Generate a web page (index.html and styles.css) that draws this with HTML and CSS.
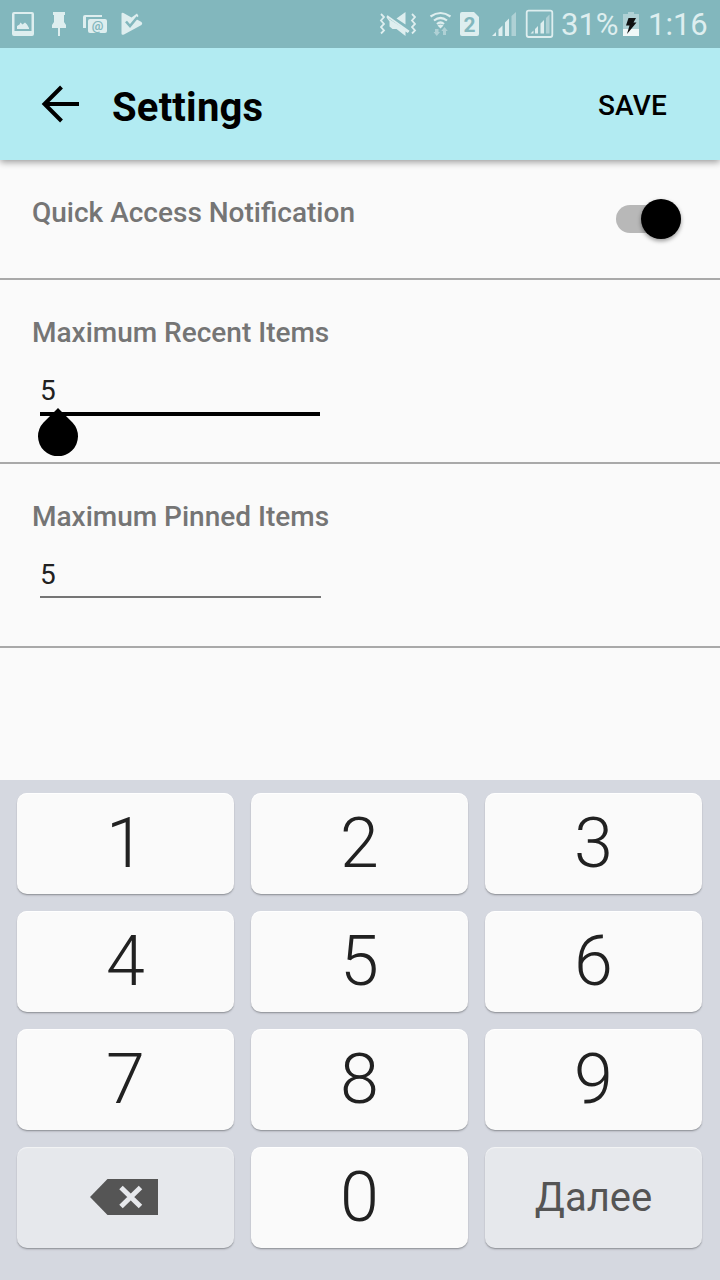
FILE: index.html
```html
<!DOCTYPE html>
<html lang="en">
<head>
    <meta charset="UTF-8">
    <meta name="viewport" content="width=device-width, initial-scale=1.0">
    <title>Settings</title>
    <link rel="stylesheet" href="styles.css">
</head>
<body>
    <!-- Status bar -->
    <div class="status-bar">
        <div class="status-left">
            <svg width="42" height="48" viewBox="0 0 42 48">
                <path fill-rule="evenodd" d="M14 12h18q2 0 2 2v20q0 2-2 2H14q-2 0-2-2V14q0-2 2-2zM14.500 14v17h17V14z"/>
                <path d="M17 29v-3l2.500-1.500 1-2 2 2 2.500-2 2 2 2 3.500v1z"/>
            </svg>
            <svg width="34" height="48" viewBox="42 0 34 48">
                <path d="M53 12h12v3h-1v7l2 3v3h-6v8h-2v-8h-6v-3l2-3v-7h-1z"/>
            </svg>
            <svg width="40" height="48" viewBox="76 0 40 48">
                <path d="M83 28V17q0-2 2-2h17v2H86v11z"/>
                <rect x="88" y="19" width="19" height="14" rx="2"/>
                <text class="at-sign" x="97.500" y="30" text-anchor="middle">@</text>
            </svg>
            <svg width="34" height="48" viewBox="116 0 34 48">
                <path d="M121.500 14q0-2 2-1l8 4.500 5.500-4 1.500 2.500-2.500 3 5.500 3q1.500 1.500 0 3L124 34.500q-2.500 1-2.500-1z"/>
                <path class="cut" d="M126 21.500l4 4.500 7.500-9"/>
            </svg>
        </div>
        <div class="status-right">
            <svg width="52" height="48" viewBox="372 0 52 48">
                <path class="line" d="M381 14l3 3-3 3.500 3 3.500-3 3 3 3.500-3 3M412 14l3 3-3 3.500 3 3.500-3 3 3 3.500-3 3"/>
                <path d="M405.500 12v12.500l-9-6zM389 19l20 12.500-1.300 1.500-2.200-1.500V36l-9-7h-4l-3-2.500v-5l-3-4 1.500-2z"/>
                <path class="line" d="M387 16l22 15.500"/>
            </svg>
            <svg width="32" height="48" viewBox="424 0 32 48">
                <path class="line wide" d="M430.500 16.500q10-7 20 0M434 20.500q6.500-5 13 0M437 24q3.500-3 7 0"/>
                <path d="M437.500 25.500q3-2 6 0l-3 3z"/>
                <path class="faded" d="M435 29h3.500v3h1.500l-3.200 4-3.300-4h1.500zM443 35v-4h-1.700l3.200-4 3.300 4H446v4z"/>
            </svg>
            <svg width="30" height="48" viewBox="456 0 30 48">
                <path d="M462 12h12l5 5v17q0 2-2 2h-15q-2 0-2-2V14q0-2 2-2z"/>
                <text class="sim-number" x="469.500" y="31.500" text-anchor="middle">2</text>
            </svg>
            <svg width="36" height="48" viewBox="486 0 36 48">
                <path d="M492 36l4-4v4zM498.500 29.500l4-4V36h-4zM505 22.500l4-4V36h-4z"/>
                <path class="faded" d="M511.500 16l4.500-4v24h-4.500z"/>
            </svg>
            <svg width="38" height="48" viewBox="522 0 38 48">
                <rect class="line" x="526.700" y="10.700" width="25.600" height="26.300" rx="2"/>
                <path d="M530.500 33.500l3-3v3zM535 29l3-3v7.500h-3zM540.500 23.500l3.500-3.500v13.500h-3.500z"/>
                <path class="faded" d="M546 18l3.500-3.500v19H546z"/>
            </svg>
            <span class="battery-level">31%</span>
            <svg width="30" height="48" viewBox="617 0 30 48">
                <path class="faded" d="M628 12h6v2h5v15h-16V14h5z"/>
                <rect class="charge" x="623" y="29" width="16" height="7"/>
                <path class="bolt" d="M628.500 18h7.500l-2.500 4.500h3L627 34l2.500-8.500H626z"/>
            </svg>
            <span class="clock">1:16</span>
        </div>
    </div>

    <!-- App bar -->
    <div class="app-bar">
        <svg class="back-arrow" width="40" height="40" viewBox="0 0 40 40">
            <path d="M39 20H4M21.500 3L4.500 20l17 17"/>
        </svg>
        <h1>Settings</h1>
        <button class="save">SAVE</button>
    </div>

    <!-- Settings list -->
    <div class="settings">
        <div class="setting switch-row">
            <h2>Quick Access Notification</h2>
            <div class="switch"><div class="thumb"></div></div>
        </div>
        <div class="setting">
            <h2>Maximum Recent Items</h2>
            <div class="field active">5
                <svg class="handle" width="40" height="48" viewBox="0 0 40 48">
                    <path d="M20 0L34.500 14.500A20 20 0 1 1 5.500 14.500z"/>
                </svg>
            </div>
        </div>
        <div class="setting">
            <h2>Maximum Pinned Items</h2>
            <div class="field">5</div>
        </div>
    </div>

    <!-- Keyboard -->
    <div class="keyboard">
        <div class="key">1</div>
        <div class="key">2</div>
        <div class="key">3</div>
        <div class="key">4</div>
        <div class="key">5</div>
        <div class="key">6</div>
        <div class="key">7</div>
        <div class="key">8</div>
        <div class="key">9</div>
        <div class="key special">
            <svg class="backspace" width="68" height="38" viewBox="0 0 68 38">
                <path d="M0 19L17.500 1H68v36H17.500z"/>
                <path class="cross" d="M31 9.500l19.500 19M50.500 9.500l-19.500 19"/>
            </svg>
        </div>
        <div class="key">0</div>
        <div class="key special">Далее</div>
    </div>
</body>
</html>
```
FILE: styles.css
```css
* {
    box-sizing: border-box;
}

body {
    font-family: Roboto, sans-serif;
    margin: 0;
    width: 720px;
    height: 1280px;
    display: flex;
    flex-direction: column;
    background-color: #fafafa;
    color: #212121;
    overflow: hidden;
}

svg {
    display: block;
    flex-shrink: 0;
}

/* Status bar */
.status-bar {
    height: 48px;
    flex-shrink: 0;
    z-index: 1;
    display: flex;
    justify-content: space-between;
    background-color: #82b7bd;
    color: #deeeef;
    fill: #deeeef;
}

.status-left, .status-right {
    display: flex;
}

.status-right {
    width: 348px;
}

.status-bar .line {
    fill: none;
    stroke: #deeeef;
    stroke-width: 1.8;
}

.status-bar .wide {
    stroke-width: 2.2;
}

.status-bar .cut {
    fill: none;
    stroke: #82b7bd;
    stroke-width: 2.6;
}

.status-bar .faded {
    fill: #afd1d5;
}

.status-bar .charge {
    fill: #f0f8f8;
}

.status-bar .bolt {
    fill: #111;
}

.at-sign {
    font-size: 13px;
    font-weight: 700;
    fill: #82b7bd;
}

.sim-number {
    font-size: 21px;
    font-weight: 700;
    fill: #82b7bd;
}

.battery-level, .clock {
    font-size: 31px;
    line-height: 50px;
    white-space: nowrap;
}

.battery-level {
    width: 57px;
    padding-left: 1px;
}

.clock {
    padding-left: 1px;
}

/* App bar */
.app-bar {
    height: 112px;
    flex-shrink: 0;
    display: flex;
    align-items: center;
    padding: 0 53px 0 40px;
    background-color: #b2ebf2;
    color: #000;
    box-shadow: 0 2px 7px rgba(0, 0, 0, 0.4);
}

.back-arrow {
    fill: none;
    stroke: #000;
    stroke-width: 4;
}

.app-bar h1 {
    flex: 1;
    margin: 6px 0 0 32px;
    font-size: 40px;
    font-weight: 700;
    letter-spacing: 0.2px;
}

.save {
    margin: 2px 0 0;
    padding: 0;
    border: none;
    background: none;
    color: #000;
    font-family: inherit;
    font-size: 28px;
    font-weight: 500;
    letter-spacing: 0.2px;
}

/* Settings list */
.settings {
    height: 620px;
    flex-shrink: 0;
}

.setting {
    height: 184px;
    padding: 36px 32px 0;
    border-bottom: 2px solid #a9a9a9;
}

.setting h2 {
    margin: 0;
    font-size: 28px;
    line-height: 34px;
    font-weight: 500;
    color: #757575;
}

.switch-row {
    height: 120px;
    display: flex;
    justify-content: space-between;
}

.switch {
    width: 65px;
    height: 28px;
    margin: 9px 7px 0 0;
    display: flex;
    justify-content: flex-end;
    align-items: center;
    border-radius: 14px;
    background-color: #b8b8b8;
}

.thumb {
    width: 40px;
    height: 40px;
    border-radius: 50%;
    background-color: #000;
    box-shadow: 0 2px 4px rgba(0, 0, 0, 0.4);
}

.field {
    position: relative;
    width: 281px;
    height: 46px;
    margin: 18px 0 0 8px;
    line-height: 46px;
    font-size: 28px;
    border-bottom: 2px solid #757575;
}

.field.active {
    width: 280px;
    height: 48px;
    border-bottom: 4px solid #000;
}

/* Text cursor handle hanging below the active field */
.handle {
    position: absolute;
    left: -2px;
    top: 40px;
    fill: #000;
}

/* Keyboard */
.keyboard {
    height: 500px;
    padding: 13px 18px 0 17px;
    display: grid;
    grid-template-columns: repeat(3, 217px);
    grid-auto-rows: 101px;
    gap: 17px;
    background-color: #d5d8e0;
}

.key {
    display: flex;
    align-items: center;
    justify-content: center;
    padding-bottom: 2px;
    border-radius: 10px;
    background-color: #fafafa;
    box-shadow: 0 1px 1px #96999f, 0 2px 2px rgba(0, 0, 0, 0.1), inset 0 1px 1px #fff;
    font-size: 70px;
    font-weight: 300;
}

.key.special {
    padding-bottom: 0;
    background-color: #e6e8ec;
    box-shadow: 0 1px 1px #96999f, 0 2px 2px rgba(0, 0, 0, 0.1), inset 0 1px 1px #f3f4f6;
    color: #555;
    font-size: 40px;
    font-weight: 400;
}

.backspace {
    fill: #555;
    margin: 0 3px 2px 0;
    margin-left: -1px;
}

.backspace .cross {
    stroke: #e6e8ec;
    stroke-width: 5;
}
```
